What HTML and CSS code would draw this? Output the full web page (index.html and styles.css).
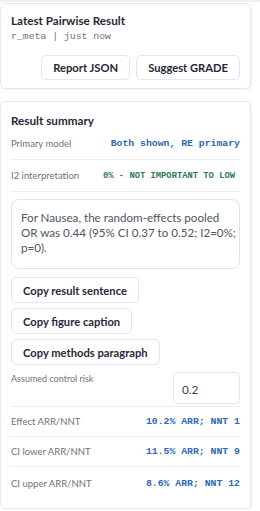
FILE: index.html
```html
<!DOCTYPE html>
<html>
<head>
<meta charset="utf-8">
<link rel="stylesheet" href="styles.css">
</head>
<body>
<div class="panel">
  <section class="card card-top">
    <h2 class="title">Latest Pairwise Result</h2>
    <div class="meta">r_meta | just now</div>
    <div class="actions">
      <button class="btn">Report JSON</button>
      <button class="btn">Suggest GRADE</button>
    </div>
  </section>

  <section class="card card-summary">
    <h2 class="title">Result summary</h2>
    <div class="row">
      <span class="label">Primary model</span>
      <span class="value blue">Both shown, RE primary</span>
    </div>
    <div class="row">
      <span class="label">I2 interpretation</span>
      <span class="value green small">0% - NOT IMPORTANT TO LOW</span>
    </div>
    <div class="sentence">For Nausea, the random-effects pooled OR was 0.44 (95% CI 0.37 to 0.52; I2=0%; p=0).</div>
    <div class="copy-list">
      <button class="btn">Copy result sentence</button>
      <button class="btn">Copy figure caption</button>
      <button class="btn">Copy methods paragraph</button>
    </div>
    <div class="risk">
      <span class="risk-label">Assumed control risk</span>
      <div class="input">0.2</div>
    </div>
    <div class="row compact">
      <span class="label">Effect ARR/NNT</span>
      <span class="value blue">10.2% ARR; NNT 1</span>
    </div>
    <div class="row compact">
      <span class="label">CI lower ARR/NNT</span>
      <span class="value blue">11.5% ARR; NNT 9</span>
    </div>
    <div class="row compact last">
      <span class="label">CI upper ARR/NNT</span>
      <span class="value blue">8.6% ARR; NNT 12</span>
    </div>
  </section>
</div>
</body>
</html>
```

FILE: styles.css
```css
* { box-sizing: border-box; }
html, body { margin: 0; padding: 0; background: #ffffff; }
body {
  font-family: Lato, "Noto Sans", sans-serif;
  color: #1f2937;
  border-top: 2px solid #eef0f4;
}
.panel {
  width: 253px;
  padding-top: 1px;
  display: flex;
  flex-direction: column;
  gap: 12px;
}
.card {
  width: 251px;
  background: #fff;
  border: 1px solid #e6e8ec;
  border-radius: 5px;
  box-shadow: 1px 1px 1px rgba(0,0,0,0.05);
  padding: 0 10px;
}
.card-top { height: 86px; padding-top: 8px; }
.title {
  margin: 0;
  font-size: 11.7px;
  font-weight: 700;
  line-height: 16px;
  color: #1f2937;
}
.meta {
  margin-top: 2px;
  font-family: "Liberation Mono", "DejaVu Sans Mono", monospace;
  font-size: 9.8px;
  line-height: 14px;
  color: #6b7280;
}
.actions {
  display: flex;
  justify-content: flex-end;
  gap: 6px;
  margin-top: 11px;
}
.btn {
  font-family: Lato, "Noto Sans", sans-serif;
  font-weight: 700;
  font-size: 11.2px;
  color: #1f2937;
  background: #fff;
  border: 1px solid #e3e6ea;
  border-radius: 5px;
  height: 25px;
  padding: 0 11px;
  cursor: pointer;
}
.card-summary { padding-top: 10px; padding-bottom: 9px; }
.row {
  display: flex;
  justify-content: space-between;
  align-items: center;
  height: 32px;
  border-bottom: 1px solid #eceef1;
}
.row.compact { height: 30px; }
.row.last { border-bottom: none; height: 32px; }
.label { font-size: 9.5px; color: #6b7280; }
.value {
  font-family: "Liberation Mono", "DejaVu Sans Mono", monospace;
  font-weight: 700;
  font-size: 9.8px;
}
.value.small { font-size: 8.8px; margin-right: 5px; }
.blue { color: #2f67b7; }
.green { color: #2f7a52; }
.sentence {
  margin-top: 7px;
  border: 1px solid #dfe4ec;
  border-radius: 8px;
  padding: 10px 3px 9px 9px;
  font-size: 11.6px;
  line-height: 15px;
  color: #4b5563;
  height: 70px;
}
.copy-list {
  display: flex;
  flex-direction: column;
  align-items: flex-start;
  gap: 5px;
  margin-top: 8px;
}
.copy-list .btn { height: 26px; }
.risk {
  display: flex;
  justify-content: space-between;
  align-items: flex-start;
  margin-top: 7px;
  padding-bottom: 2px;
  border-bottom: 1px solid #eceef1;
}
.risk-label { font-size: 9px; color: #6b7280; margin-top: 1px; }
.input {
  width: 67px;
  height: 32px;
  border: 1px solid #e3e6ea;
  border-radius: 4px;
  font-size: 11.7px;
  color: #374151;
  padding: 8px 8px;
  line-height: 16px;
}
```
